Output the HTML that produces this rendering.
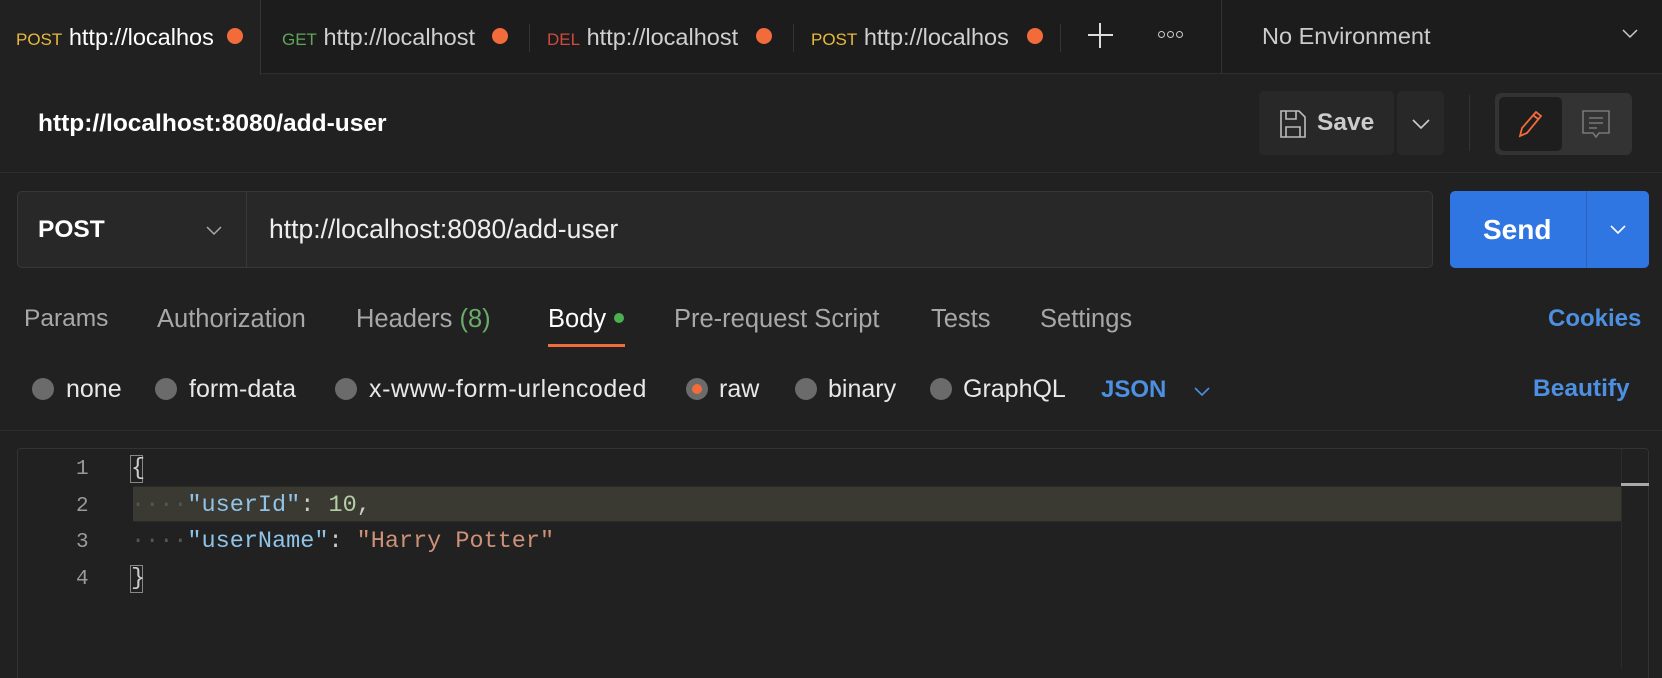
<!DOCTYPE html>
<html><head><style>
*{margin:0;padding:0;box-sizing:border-box}
body{width:1662px;height:664px;background:#212121;font-family:"Liberation Sans",sans-serif;color:#fff;position:relative;overflow:hidden}
.a{position:absolute;white-space:nowrap}
.t{font-size:23.5px;color:#d0d0d0}
.dot{position:absolute;width:16px;height:16px;border-radius:50%;background:#f26b3a}
.r{position:absolute;width:22px;height:22px;border-radius:50%;background:#6b6b6b}
.rl{font-size:25px;color:#e8e8e8;top:375px}
.tb{top:305px;font-size:25.5px;color:#a8a8a8}
.code{font-family:"Liberation Mono",monospace;font-size:23.5px}
.c{position:absolute;width:7px;height:7px;border:1.5px solid #ccc;border-radius:50%}
</style></head><body>
<div class="a" style="left:0;top:0;width:1662px;height:74px;background:#1c1c1c;border-bottom:1px solid #2e2e2e"></div>
<div class="a" style="left:0;top:0;width:261px;height:75px;background:#212121;border-right:1px solid #333"></div>
<div class="a t" style="left:16px;top:24px"><span style="font-size:17px;color:#e8b93a">POST</span> <span style="color:#fff">http://localhos</span></div><div class="dot" style="left:227px;top:28px"></div>
<div class="a t" style="left:282px;top:24px"><span style="font-size:17px;color:#5fa55a">GET</span> http://localhost</div><div class="dot" style="left:492px;top:28px"></div>
<div class="a" style="left:529px;top:24px;width:1px;height:28px;background:#333"></div>
<div class="a t" style="left:547px;top:24px"><span style="font-size:17px;color:#d04a3e">DEL</span> http://localhost</div><div class="dot" style="left:756px;top:28px"></div>
<div class="a" style="left:793px;top:24px;width:1px;height:28px;background:#333"></div>
<div class="a t" style="left:811px;top:24px;width:200px;overflow:hidden"><span style="font-size:17px;color:#e8b93a">POST</span> http://localhos</div><div class="dot" style="left:1027px;top:28px"></div>
<div class="a" style="left:1060px;top:24px;width:1px;height:28px;background:#333"></div>
<div class="a" style="left:1088px;top:34px;width:25px;height:2px;background:#ddd"></div>
<div class="a" style="left:1099px;top:23px;width:2px;height:25px;background:#ddd"></div>
<div class="c" style="left:1158px;top:31px"></div><div class="c" style="left:1167px;top:31px"></div><div class="c" style="left:1176px;top:31px"></div>
<div class="a" style="left:1221px;top:0;width:1px;height:74px;background:#333"></div>
<div class="a t" style="left:1262px;top:23px;color:#ccc">No Environment</div>
<svg class="a" style="left:1622px;top:28px" width="16" height="12"><path d="M1 2l7 7 7-7" stroke="#ccc" fill="none" stroke-width="1.5"/></svg>
<div class="a" style="left:38px;top:110px;font-size:24.5px;font-weight:bold;color:#fff">http://localhost:8080/add-user</div>
<div class="a" style="left:1259px;top:91px;width:135px;height:64px;background:#282828;border-radius:5px"></div>
<svg class="a" style="left:1279px;top:109px" width="28" height="30"><path d="M2 2h18l6 6v20H2z M7 2v8h10V2 M7 28V18h14v10" stroke="#bbb" fill="none" stroke-width="1.6"/></svg>
<div class="a" style="left:1317px;top:109px;font-size:24.5px;font-weight:bold;color:#ccc">Save</div>
<div class="a" style="left:1397px;top:91px;width:47px;height:64px;background:#282828;border-radius:5px"></div>
<svg class="a" style="left:1412px;top:118px" width="18" height="12"><path d="M1 2l8 8 8-8" stroke="#ccc" fill="none" stroke-width="1.6"/></svg>
<div class="a" style="left:1469px;top:95px;width:1px;height:56px;background:#333"></div>
<div class="a" style="left:1495px;top:93px;width:137px;height:62px;background:#333;border-radius:6px"></div>
<div class="a" style="left:1499px;top:97px;width:63px;height:54px;background:#1e1e1e;border-radius:5px"></div>
<svg class="a" style="left:1516px;top:108px" width="30" height="32"><path d="M4 28l2-8L20 4l5 4-14 17z M17 7l5 4" stroke="#f26b3a" fill="none" stroke-width="1.8"/></svg>
<svg class="a" style="left:1581px;top:109px" width="30" height="30"><path d="M2 2h26v22H18l-3 4-3-4H2z M8 9h14 M8 14h14 M8 19h8" stroke="#777" fill="none" stroke-width="1.6"/></svg>
<div class="a" style="left:0;top:172px;width:1662px;height:1px;background:#2e2e2e"></div>
<div class="a" style="left:17px;top:191px;width:1416px;height:77px;background:#282828;border:1px solid #383838;border-radius:5px"></div>
<div class="a" style="left:246px;top:192px;width:1px;height:75px;background:#383838"></div>
<div class="a" style="left:38px;top:216px;font-size:24.5px;font-weight:bold">POST</div>
<svg class="a" style="left:206px;top:225px" width="16" height="11"><path d="M1 2l7 7 7-7" stroke="#aaa" fill="none" stroke-width="1.5"/></svg>
<div class="a" style="left:269px;top:214px;font-size:26.5px;color:#eee">http://localhost:8080/add-user</div>
<div class="a" style="left:1450px;top:191px;width:199px;height:77px;background:#2f76e3;border-radius:5px"></div>
<div class="a" style="left:1586px;top:191px;width:1px;height:77px;background:#2a63bf"></div>
<div class="a" style="left:1483px;top:214px;font-size:28px;font-weight:bold">Send</div>
<svg class="a" style="left:1610px;top:224px" width="16" height="11"><path d="M1 2l7 7 7-7" stroke="#fff" fill="none" stroke-width="1.6"/></svg>
<div class="a tb" style="left:24px;font-size:24.5px">Params</div>
<div class="a tb" style="left:157px">Authorization</div>
<div class="a tb" style="left:356px">Headers <span style="color:#6aaa6a">(8)</span></div>
<div class="a tb" style="color:#fff;left:548px">Body</div>
<div class="a" style="left:614px;top:313px;width:10px;height:10px;border-radius:50%;background:#4caf50"></div>
<div class="a" style="left:548px;top:344px;width:77px;height:3px;background:#f26b3a"></div>
<div class="a tb" style="left:674px">Pre-request Script</div>
<div class="a tb" style="left:931px">Tests</div>
<div class="a tb" style="left:1040px">Settings</div>
<div class="a tb" style="color:#4d8fe0;font-weight:bold;left:1548px;font-size:24px">Cookies</div>
<div class="r" style="left:32px;top:378px"></div><div class="a rl" style="left:66px">none</div>
<div class="r" style="left:155px;top:378px"></div><div class="a rl" style="left:189px">form-data</div>
<div class="r" style="left:335px;top:378px"></div><div class="a rl" style="left:369px;letter-spacing:0.6px">x-www-form-urlencoded</div>
<div class="r" style="left:686px;top:378px"></div><div class="a" style="left:692px;top:384px;width:10px;height:10px;border-radius:50%;background:#f26b3a"></div><div class="a rl" style="left:719px">raw</div>
<div class="r" style="left:795px;top:378px"></div><div class="a rl" style="left:828px">binary</div>
<div class="r" style="left:930px;top:378px"></div><div class="a rl" style="left:963px">GraphQL</div>
<div class="a rl" style="left:1101px;color:#4d8fe0;font-weight:bold;font-size:24px;top:376px">JSON</div>
<svg class="a" style="left:1194px;top:386px" width="16" height="11"><path d="M1 2l7 7 7-7" stroke="#4d8fe0" fill="none" stroke-width="1.6"/></svg>
<div class="a rl" style="left:1533px;color:#4d8fe0;font-weight:bold;font-size:24.5px">Beautify</div>
<div class="a" style="left:0;top:430px;width:1662px;height:1px;background:#2e2e2e"></div>
<div class="a" style="left:17px;top:448px;width:1632px;height:230px;border:1px solid #333;border-bottom:none;border-radius:4px 4px 0 0"></div>
<div class="a" style="left:133px;top:486px;width:1488px;height:36px;background:#3a3a32;border-top:1px solid #2a2a24;border-bottom:1px solid #2a2a24"></div>
<div class="a" style="left:1621px;top:449px;width:1px;height:220px;background:#2c2c2c"></div>
<div class="a" style="left:1621px;top:483px;width:28px;height:3px;background:#aaa"></div>
<div class="a code" style="left:76px;top:452px;color:#9a9a9a;line-height:36.5px;font-size:21px">1<br>2<br>3<br>4</div>
<div class="a" style="left:130px;top:455px;width:13px;height:28px;border:1px solid #888"></div>
<div class="a" style="left:130px;top:565px;width:13px;height:28px;border:1px solid #888"></div>
<div class="a code" style="left:131px;top:451px;line-height:36.5px;color:#ccc">{<br><span style="color:#555">····</span><span style="color:#8fc3e8">"userId"</span>: <span style="color:#b5cea8">10</span>,<br><span style="color:#555">····</span><span style="color:#8fc3e8">"userName"</span>: <span style="color:#ce9178">"Harry Potter"</span><br>}</div>
</body></html>
